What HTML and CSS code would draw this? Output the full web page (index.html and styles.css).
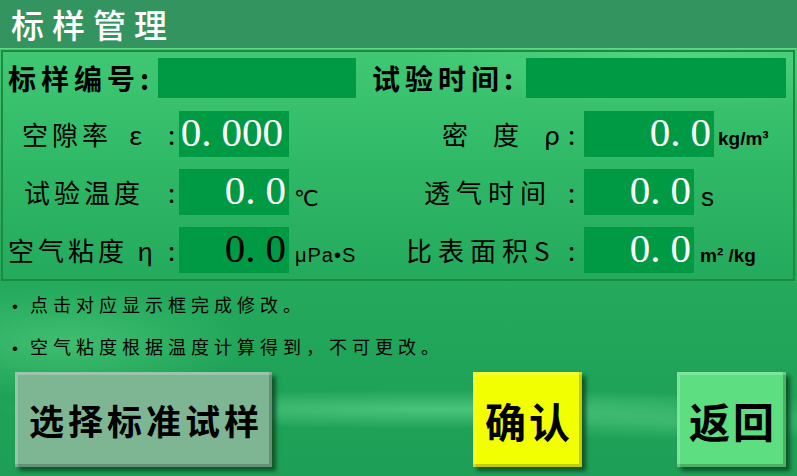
FILE: index.html
```html
<!DOCTYPE html>
<html lang="zh-CN">
<head>
<meta charset="utf-8">
<title>标样管理</title>
<link rel="stylesheet" href="styles.css">
</head>
<body>
<div class="screen">
  <header class="titlebar"><h1 class="title">标样管理</h1></header>

  <section class="panel">
    <div class="row-top">
      <span class="label-strong">标样编号:</span>
      <div class="field field-id"></div>
      <span class="label-strong label-time">试验时间:</span>
      <div class="field field-time"></div>
    </div>

    <div class="grid">
      <span class="label label-void"><span class="lt">空隙率&ensp;ε</span><span class="colon">:</span></span>
      <div class="cell"><div class="value value-void">0<span class="dp">.</span>000</div></div>
      <span class="label label-right label-dens"><span class="lt">密&ensp;度&ensp;ρ</span><span class="colon">:</span></span>
      <div class="cell"><div class="value value-wide">0<span class="dp">.</span>0</div><span class="unit unit-bold">kg/m³</span></div>

      <span class="label label-temp"><span class="lt">试验温度</span><span class="colon">:</span></span>
      <div class="cell"><div class="value">0<span class="dp">.</span>0</div><span class="unit unit-c">℃</span></div>
      <span class="label label-right label-perm"><span class="lt">透气时间</span><span class="colon">:</span></span>
      <div class="cell"><div class="value">0<span class="dp">.</span>0</div><span class="unit unit-s">s</span></div>

      <span class="label label-visc"><span class="lt">空气粘度&thinsp;η</span><span class="colon">:</span></span>
      <div class="cell"><div class="value value-dark">0<span class="dp">.</span>0</div><span class="unit unit-visc">μPa•S</span></div>
      <span class="label label-right label-area"><span class="lt">比表面积S</span><span class="colon">:</span></span>
      <div class="cell"><div class="value">0<span class="dp">.</span>0</div><span class="unit unit-bold unit-area">m² /kg</span></div>
    </div>
  </section>

  <ul class="notes">
    <li>点击对应显示框完成修改。</li>
    <li>空气粘度根据温度计算得到，不可更改。</li>
  </ul>

  <div class="actions">
    <button class="btn btn-select">选择标准试样</button>
    <button class="btn btn-confirm">确认</button>
    <button class="btn btn-back">返回</button>
  </div>
</div>
</body>
</html>
```

FILE: styles.css
```css
html, body {
  margin: 0;
  padding: 0;
}

body {
  width: 797px;
  height: 476px;
  overflow: hidden;
  font-family: "Noto Sans CJK SC", "Noto Sans", sans-serif;
  color: #000;
}

.screen {
  width: 797px;
  height: 476px;
  display: flex;
  flex-direction: column;
  background:
    radial-gradient(ellipse 260px 80px at 8% 72%, rgba(120, 235, 150, 0.35), rgba(120, 235, 150, 0) 70%),
    radial-gradient(ellipse 600px 26px at 55% 86%, rgba(110, 225, 150, 0.55), rgba(110, 225, 150, 0) 75%),
    radial-gradient(ellipse 320px 22px at 88% 89%, rgba(110, 225, 150, 0.35), rgba(110, 225, 150, 0) 75%),
    radial-gradient(ellipse 360px 70px at 85% 12%, rgba(110, 235, 150, 0.35), rgba(110, 235, 150, 0) 75%),
    linear-gradient(180deg, #45cd78 0px, #3cc470 80px, #30b967 160px, #26ac5e 260px, #20a459 360px, #1e9f57 476px);
}

/* ---------- title bar ---------- */
.titlebar {
  height: 48px;
  background: #33945f;
  border-bottom: 1px solid #5ed88a;
  display: flex;
  align-items: center;
  padding-left: 11px;
  flex: none;
}

.title {
  margin: 0;
  font-size: 33px;
  font-weight: 500;
  letter-spacing: 8px;
  color: #fff;
  line-height: 48px;
  white-space: nowrap;
}

/* ---------- main panel ---------- */
.panel {
  margin: 1px 2px 0 1px;
  border: 2px solid #1b8c3e;
  padding: 6px 7px 6px 5px;
  flex: none;
}

.row-top {
  height: 40px;
  display: flex;
  align-items: center;
  margin-bottom: 13px;
}

.label-strong {
  font-size: 28px;
  font-weight: 700;
  letter-spacing: 5px;
  line-height: 40px;
  width: 150px;
  white-space: nowrap;
}

.label-time {
  margin-left: 16px;
  width: 154px;
}

.field {
  height: 40px;
  background: #009944;
}

.field-id {
  width: 198px;
}

.field-time {
  width: 260px;
}

.grid {
  display: grid;
  grid-template-columns: 171px 220px 185px 1fr;
  grid-template-rows: repeat(3, 46px);
  row-gap: 12px;
  align-items: center;
}

.label {
  display: flex;
  align-items: center;
  justify-content: space-between;
  font-size: 26px;
  font-weight: 400;
  line-height: 46px;
  white-space: nowrap;
}

.lt {
  letter-spacing: 4px;
}

.colon {
  width: 9px;
  margin-right: 2px;
}

.label-right .lt {
  letter-spacing: 6px;
}

.label-right .colon {
  margin-right: 7px;
}

.label-void { padding-left: 14px; }
.label-temp { padding-left: 16px; }
.label-visc { padding-left: 0; }
.label-dens { padding-left: 43px; }
.label-perm { padding-left: 25px; }
.label-area { padding-left: 7px; }

.cell {
  display: flex;
  align-items: center;
  height: 46px;
}

.value {
  width: 110px;
  height: 46px;
  background: #009944;
  color: #fff;
  font-family: "Liberation Serif", serif;
  font-size: 41px;
  line-height: 42px;
  text-align: right;
  box-sizing: border-box;
  padding-right: 3px;
  white-space: nowrap;
}

.value-wide {
  width: 130px;
}

.value-void {
  padding-right: 6px;
}

.value-dark {
  color: #000;
}

.dp {
  letter-spacing: 10px;
}

.unit {
  font-family: "Liberation Sans", "DejaVu Sans", sans-serif;
  margin-left: 5px;
  white-space: nowrap;
}

.unit-bold {
  font-weight: 700;
  font-size: 19px;
  padding-top: 10px;
  margin-left: 4px;
}

.unit-area {
  margin-left: 6px;
  padding-top: 12px;
}

.unit-c {
  font-family: "DejaVu Sans", sans-serif;
  font-size: 22px;
  padding-top: 12px;
}

.unit-s {
  font-size: 26px;
  margin-left: 7px;
  padding-top: 10px;
}

.unit-visc {
  font-size: 20px;
  padding-top: 10px;
  margin-left: 6px;
  letter-spacing: 1px;
}

/* ---------- notes ---------- */
.notes {
  list-style: none;
  margin: 2px 0 0;
  padding: 0 0 0 12px;
  flex: none;
}

.notes li {
  font-size: 18px;
  line-height: 42px;
  height: 42px;
  letter-spacing: 5px;
  white-space: nowrap;
}

.notes li::before {
  content: "•";
  font-family: "Liberation Sans", sans-serif;
  font-size: 17px;
  line-height: 1;
  letter-spacing: 0;
  display: inline-block;
  width: 18px;
}

/* ---------- buttons ---------- */
.actions {
  display: flex;
  margin-top: 5px;
  padding-left: 15px;
  flex: none;
}

.btn {
  height: 95px;
  border: none;
  padding: 0;
  font-family: "Noto Sans CJK SC", sans-serif;
  font-weight: 700;
  color: #000;
  box-shadow:
    inset 3px 3px 0 rgba(255, 255, 255, 0.22),
    inset -3px -3px 0 rgba(0, 0, 0, 0.2),
    4px 4px 4px rgba(10, 60, 25, 0.75);
}

.btn-select {
  width: 257px;
  background: #7eb593;
  font-size: 35px;
  letter-spacing: 4px;
  padding-left: 5px;
}

.btn-confirm {
  width: 109px;
  margin-left: 201px;
  background: #f2ff00;
  font-size: 41px;
  letter-spacing: 3px;
  padding-left: 3px;
}

.btn-back {
  width: 109px;
  margin-left: 95px;
  background: #5dde80;
  font-size: 41px;
  letter-spacing: 3px;
  padding-left: 3px;
}
```
